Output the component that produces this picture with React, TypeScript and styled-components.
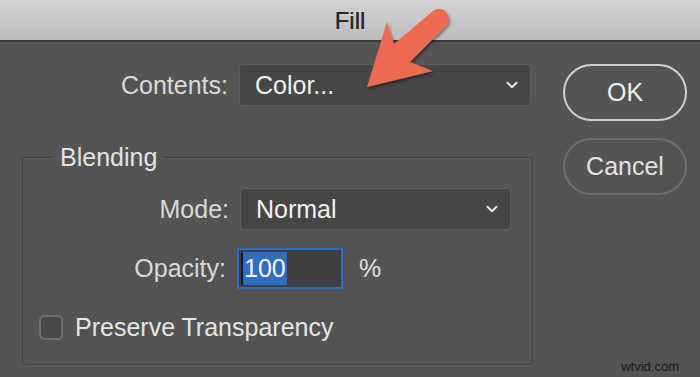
import React from "react";
import styled, { createGlobalStyle } from "styled-components";

const Global = createGlobalStyle`
  html, body { margin: 0; padding: 0; background: #545454; }
  body { font-family: "Liberation Sans", Arial, sans-serif; }
  * { box-sizing: border-box; }
`;

const Window = styled.div`
  position: relative;
  width: 700px;
  height: 377px;
  background: #545454;
  overflow: hidden;
  display: flex;
  flex-direction: column;
`;

const TitleBar = styled.div`
  height: 42px;
  flex: none;
  background: linear-gradient(#d2d2d2, #bcbcbc);
  border-bottom: 2px solid #3a3a3a;
  display: flex;
  align-items: center;
  justify-content: center;
  font-size: 24px;
  color: #2a2a2a;
  padding-top: 1px;
  text-shadow: 0 0 0.6px #2a2a2a;
`;

const Body = styled.div`
  display: flex;
  padding: 22px 0 0 22px;
`;

const LeftCol = styled.div`
  width: 511px;
  display: flex;
  flex-direction: column;
`;

const Row = styled.div<{ $mt?: number }>`
  display: flex;
  align-items: center;
  margin-top: ${(p) => p.$mt ?? 0}px;
`;

const Label = styled.div<{ $w: number }>`
  width: ${(p) => p.$w}px;
  text-align: right;
  font-size: 25px;
  color: #d9d9d9;
  padding-right: 11px;
  white-space: nowrap;
`;

const Select = styled.div<{ $w: number }>`
  width: ${(p) => p.$w}px;
  height: 42px;
  background: #464646;
  border: 1px solid #5e5e5e;
  border-radius: 4px;
  display: flex;
  align-items: center;
  justify-content: space-between;
  padding: 0 12px 0 15px;
  font-size: 25px;
  color: #f2f2f2;
`;

const Group = styled.fieldset`
  margin: 38px 0 0 0;
  padding: 18px 0 0 0;
  height: 221px;
  border: 1px solid #434343;
  box-shadow: 0 1px 0 #5e5e5e, inset 0 1px 0 #5c5c5c;
  border-radius: 3px;
`;

const Legend = styled.legend`
  margin-left: 30px;
  padding: 0 7px;
  font-size: 25px;
  color: #e2e2e2;
  line-height: 26px;
`;

const OpacityInput = styled.div`
  width: 106px;
  height: 41px;
  border: 2px solid #2d6cc4;
  background: #3f3f3f;
  display: flex;
  align-items: center;
  padding: 0 0 0 2px;
`;

const Caret = styled.span`
  width: 2px;
  height: 32px;
  background: #1c1c1c;
`;

const Selected = styled.span`
  background: #2f6cc2;
  color: #f4f4f4;
  font-size: 25px;
  height: 33px;
  line-height: 33px;
  padding: 0 1px 0 1px;
`;

const Percent = styled.span`
  margin-left: 16px;
  font-size: 25px;
  color: #e0e0e0;
`;

const CheckRow = styled.label`
  display: flex;
  align-items: center;
  margin: 24px 0 0 16px;
  font-size: 25px;
  color: #e4e4e4;
`;

const Box = styled.span`
  width: 24px;
  height: 25px;
  border: 2px solid #6e6e6e;
  background: #4a4a4a;
  border-radius: 5px;
  margin-right: 12px;
`;

const RightCol = styled.div`
  margin-left: 30px;
  display: flex;
  flex-direction: column;
  gap: 17px;
`;

const Button = styled.div<{ $primary?: boolean }>`
  width: 124px;
  height: 57px;
  border-radius: 29px;
  border: 2px solid ${(p) => (p.$primary ? "#cfcfcf" : "#6d6d6d")};
  display: flex;
  align-items: center;
  justify-content: center;
  font-size: 25px;
  color: ${(p) => (p.$primary ? "#f0f0f0" : "#e2e2e2")};
`;

const Watermark = styled.div`
  position: absolute;
  right: 21px;
  bottom: 3px;
  font-size: 13px;
  color: #1a1a1a;
`;

const ArrowLayer = styled.svg`
  position: absolute;
  left: 0;
  top: 0;
  pointer-events: none;
`;

const Chevron = ({ size = 12 }: { size?: number }) => (
  <svg width={size} height={size * 0.7} viewBox="0 0 12 8">
    <path d="M1.5 1.5 L6 6 L10.5 1.5" fill="none" stroke="#e6e6e6" strokeWidth="2" strokeLinecap="round" strokeLinejoin="round" />
  </svg>
);

export default function App() {
  return (
    <>
      <Global />
      <Window>
        <TitleBar>Fill</TitleBar>
        <Body>
          <LeftCol>
            <Row>
              <Label $w={217}>Contents:</Label>
              <Select $w={292}>
                <span>Color...</span>
                <Chevron />
              </Select>
            </Row>
            <Group>
              <Legend>Blending</Legend>
              <Row>
                <Label $w={217}>Mode:</Label>
                <Select $w={271}>
                  <span>Normal</span>
                  <Chevron />
                </Select>
              </Row>
              <Row $mt={18}>
                <Label $w={214}>Opacity:</Label>
                <OpacityInput>
                  <Caret />
                  <Selected>100</Selected>
                </OpacityInput>
                <Percent>%</Percent>
              </Row>
              <CheckRow>
                <Box />
                Preserve Transparency
              </CheckRow>
            </Group>
          </LeftCol>
          <RightCol>
            <Button $primary>OK</Button>
            <Button>Cancel</Button>
          </RightCol>
        </Body>
        <Watermark>wtvid.com</Watermark>
        <ArrowLayer width="700" height="377" viewBox="0 0 700 377">
          <defs>
            <filter id="sh" x="-20%" y="-20%" width="140%" height="140%">
              <feDropShadow dx="1" dy="2" stdDeviation="1.5" floodColor="#000" floodOpacity="0.45" />
            </filter>
          </defs>
          <path
            d="M367 87 L387 22 L394 44 L433 11 A10 10 0 0 1 447 25 L410 62 L433 71 Z"
            fill="#ec6a4f"
            filter="url(#sh)"
          />
        </ArrowLayer>
      </Window>
    </>
  );
}
